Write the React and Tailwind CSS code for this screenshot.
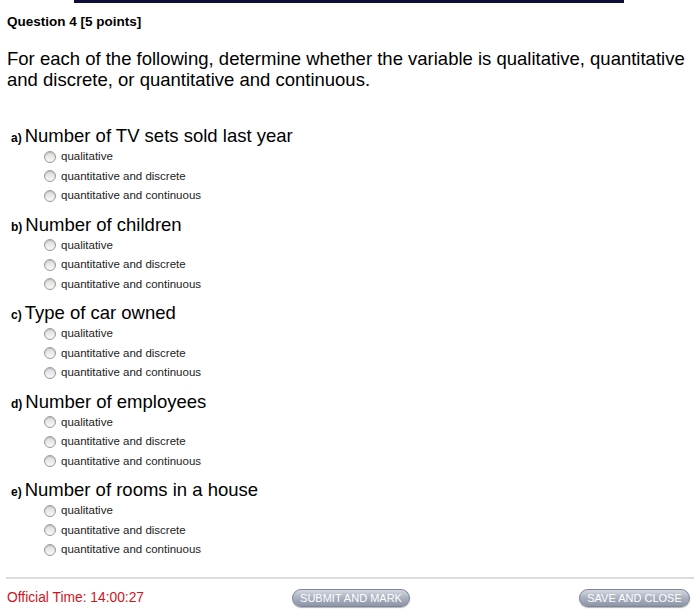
import React from 'react';

const OPTIONS = ['qualitative', 'quantitative and discrete', 'quantitative and continuous'];

const QUESTIONS = [
  { key: 'a)', text: 'Number of TV sets sold last year' },
  { key: 'b)', text: 'Number of children' },
  { key: 'c)', text: 'Type of car owned' },
  { key: 'd)', text: 'Number of employees' },
  { key: 'e)', text: 'Number of rooms in a house' },
];

const Radio = () => (
  <span className="inline-block w-[12px] h-[12px] rounded-full border border-[#9a9a9a] bg-gradient-to-b from-[#d9d9d9] to-[#fafafa] shadow-[inset_0_1px_1px_rgba(0,0,0,0.15)]" />
);

const Question = ({ q }) => (
  <div className="mb-[7px]">
    <div className="flex items-baseline h-[23px] pl-[11px]">
      <span className="text-[12px] font-bold mr-[3px]">{q.key}</span>
      <span className="text-[18.5px] leading-[23px]">{q.text}</span>
    </div>
    {OPTIONS.map((o) => (
      <div key={o} className="flex items-center h-[19.5px] pl-[44px]">
        <Radio />
        <span className="ml-[5px] text-[11.5px] text-[#222]">{o}</span>
      </div>
    ))}
  </div>
);

const Btn = ({ children, className }) => (
  <button className={`h-[18px] rounded-full border border-[#7d8598] bg-gradient-to-b from-[#d4d8e0] via-[#a9b0bf] to-[#8d95a8] text-white text-[11px] leading-none uppercase shadow-[0_1px_1px_rgba(0,0,0,0.3)] ${className}`}>
    {children}
  </button>
);

export default function App() {
  return (
    <div className="w-[700px] h-[614px] bg-white text-black relative" style={{ fontFamily: '"Liberation Sans", Arial, sans-serif' }}>
      <div className="ml-[74px] w-[550px] h-[3px] bg-[#0d0d3a]" />
      <div className="px-[7px]">
        <div className="mt-[11px] text-[13.5px] font-bold leading-[16px]">Question 4 [5 points]</div>
        <p className="mt-[18px] text-[18.5px] leading-[21px]">
          For each of the following, determine whether the variable is qualitative, quantitative and discrete, or quantitative and continuous.
        </p>
      </div>
      <div className="mt-[34px]">
        {QUESTIONS.map((q) => (
          <Question key={q.key} q={q} />
        ))}
      </div>
      <div className="absolute left-0 right-0 top-[577px] px-[6px]">
        <div className="h-[2px] bg-[#dcdcdc]" />
        <div className="flex items-center h-[38px] pl-[1px] pr-[4px]">
          <span className="text-[13.8px] text-[#d0141c] w-[285px]">Official Time: 14:00:27</span>
          <Btn className="w-[118px]">Submit and Mark</Btn>
          <div className="flex-1" />
          <Btn className="w-[111px]">Save and Close</Btn>
        </div>
      </div>
    </div>
  );
}
